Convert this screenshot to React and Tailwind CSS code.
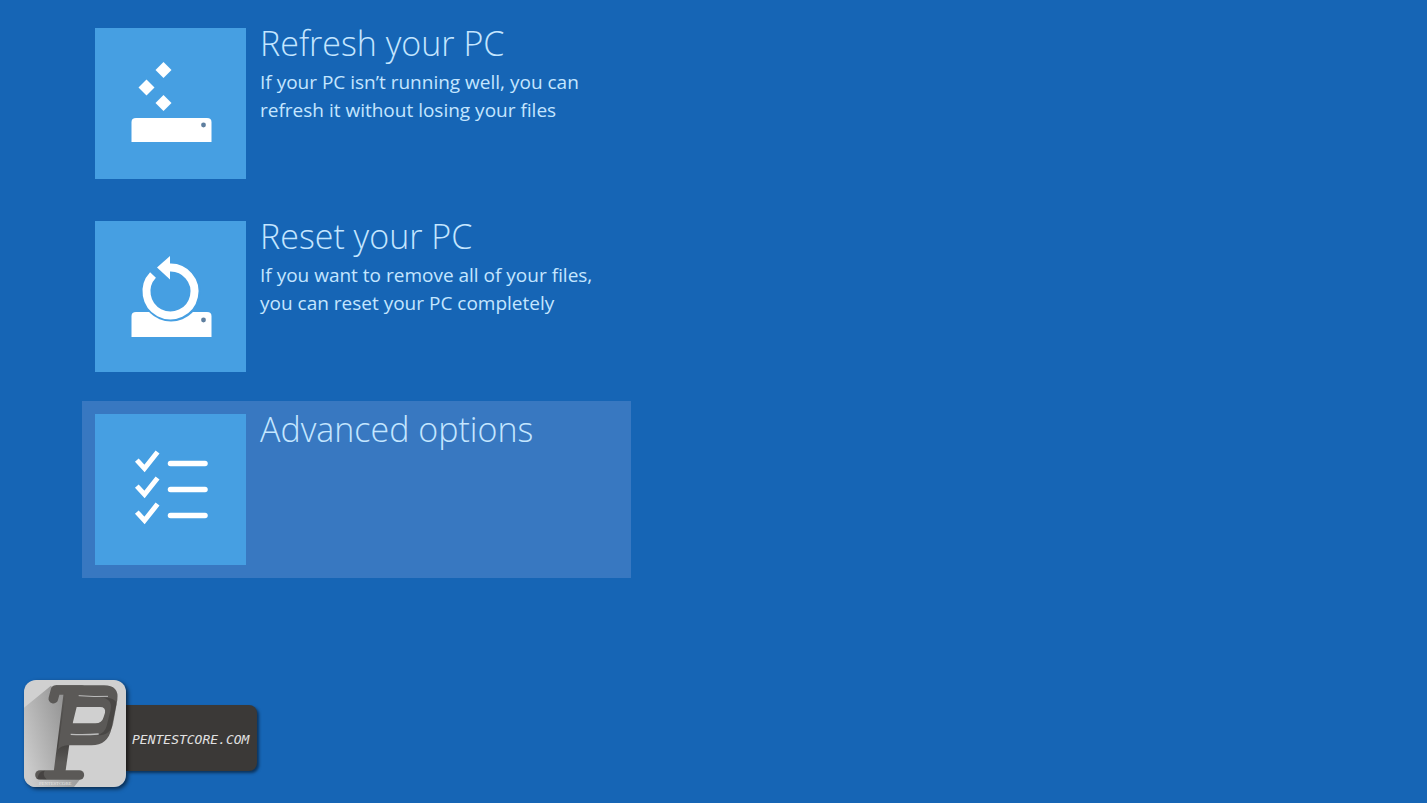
import clsx from 'clsx'

function RefreshIcon() {
  return (
    <svg viewBox="0 0 151 151" className="size-full" aria-hidden="true">
      <g fill="#fff">
        <path d="M68.500 34l8 8-8 8-8-8z" />
        <path d="M51.500 51.500l8 8-8 8-8-8z" />
        <path d="M68.500 67l8 8-8 8-8-8z" />
        <path d="M41 90h71q4.500 0 4.500 4v20h-80V94q0-4 4.500-4z" />
      </g>
      <circle cx="108.500" cy="97" r="2.4" fill="#5f7f9f" />
    </svg>
  )
}

function ResetIcon() {
  return (
    <svg viewBox="0 0 151 151" className="size-full" aria-hidden="true">
      <path d="M41 91h71q4.500 0 4.500 4v21h-80V95q0-4 4.500-4z" fill="#fff" />
      <circle cx="108.500" cy="99" r="2.4" fill="#5f7f9f" />
      {/* gap between the ring and the drive */}
      <circle cx="76" cy="70.500" r="30" fill="#469fe2" />
      <path d="M74 46.500A24 24 0 1 1 58 54" fill="none" stroke="#fff" strokeWidth="8" />
      <path d="M62 46.500L75 35V58.500z" fill="#fff" />
    </svg>
  )
}

function ChecklistIcon() {
  return (
    <svg viewBox="0 0 151 151" className="size-full" aria-hidden="true">
      <g fill="none" stroke="#fff" strokeLinecap="round">
        {[0, 26, 52].map((y) => (
          <g key={y} transform={`translate(0 ${y})`}>
            <path d="M43.500 48l6 6.500L61 40" strokeWidth="5" strokeLinecap="square" />
            <path d="M75.500 49.500H110" strokeWidth="5.500" />
          </g>
        ))}
      </g>
    </svg>
  )
}

function LogoMark() {
  return (
    <svg viewBox="28 32 306 321" className="size-full" role="img" aria-label="Pentestcore">
      <defs>
        <linearGradient id="fold" x1="1" y1="0.2" x2="0" y2="0.7">
          <stop offset="0" stopColor="#858585" />
          <stop offset="1" stopColor="#cbcbcb" />
        </linearGradient>
        <linearGradient id="stem" x1="0" y1="0" x2="0" y2="1">
          <stop offset="0" stopColor="#5b5957" />
          <stop offset="0.64" stopColor="#464442" />
          <stop offset="0.85" stopColor="#5b5957" />
        </linearGradient>
      </defs>
      <rect x="28" y="32" width="306" height="321" fill="#d0d0d0" />
      <path d="M108 50L28 115V353H178L200 325L130 310L150 200V70z" fill="url(#fold)" />
      <g stroke="#5b5957" strokeLinecap="round" fill="none">
        <path d="M116 88L123 62H200" strokeWidth="29" strokeLinejoin="round" />
        <path d="M76 317H194" strokeWidth="29" />
      </g>
      <path d="M147 70H186L151 317H116z" fill="url(#stem)" />
      <path
        fillRule="evenodd"
        fill="#5b5957"
        d="M122 48H268Q314 48 308 92L291 176Q280 228 230 228H158Q140 230 130 240L152 76zM186 113L174 162H242Q262 162 267 143L271 130Q274 113 256 113z"
      />
      <path d="M258 84Q294 88 288 122L276 170Q270 193 246 198Q290 198 296 160L306 105Q304 84 258 84z" fill="#383634" opacity="0.5" />
      <path d="M192 79Q240 83 280 81" stroke="#bdbdbd" strokeWidth="3" fill="none" />
      <path d="M168 195Q210 197 252 194" stroke="#bdbdbd" strokeWidth="4" fill="none" />
      <path d="M68 328Q72 304 90 304Q82 318 96 330z" fill="#383634" opacity="0.6" />
      <text x="73" y="347" fontSize="14" fill="#e4e4e4" className="font-['Liberation_Serif',serif]">
        PENTESTCORE
      </text>
    </svg>
  )
}

const options = [
  {
    name: 'Refresh your PC',
    description: 'If your PC isn’t running well, you can refresh it without losing your files',
    icon: RefreshIcon
  },
  {
    name: 'Reset your PC',
    description: 'If you want to remove all of your files, you can reset your PC completely',
    icon: ResetIcon
  },
  {
    name: 'Advanced options',
    icon: ChecklistIcon,
    active: true
  }
]

export default function App() {
  return (
    <div className="flex min-h-screen flex-col justify-between gap-8 bg-[#1665b5] font-['Open_Sans','Noto_Sans',sans-serif]">
      <main className="flex w-full max-w-[631px] flex-col gap-4 pt-[15px] pl-[82px]">
        {options.map((option) => (
          <button
            key={option.name}
            type="button"
            className={clsx(
              'flex w-full items-start gap-[14px] p-[13px] text-left hover:bg-[#3878c1]',
              option.active && 'bg-[#3878c1]'
            )}
          >
            <span className="size-[151px] shrink-0 bg-[#469fe2]">
              <option.icon />
            </span>
            <span className="min-w-0 flex-1">
              <span className="block text-[34px] leading-[30px] font-light text-[#c4e6ff]">{option.name}</span>
              {option.description && (
                <span className="mt-[10px] block max-w-[340px] text-[19px] leading-7 text-[#c4e6ff]">
                  {option.description}
                </span>
              )}
            </span>
          </button>
        ))}
      </main>

      <footer className="px-6 pb-4">
        <a href="https://pentestcore.com" className="inline-flex items-end align-top">
          <span className="z-10 h-[107px] w-[102px] overflow-hidden rounded-xl shadow-[2px_2px_4px_rgba(0,0,0,0.6)]">
            <LogoMark />
          </span>
          <span className="mb-4 flex h-[66px] items-center rounded-r-lg bg-[#3b3937] pt-1 pr-2 pl-1.5 font-['DejaVu_Sans_Mono',monospace] text-[13px] text-[#e2e2e2] italic shadow-[2px_2px_3px_rgba(0,0,0,0.5)]">
            PENTESTCORE.COM
          </span>
        </a>
      </footer>
    </div>
  )
}
